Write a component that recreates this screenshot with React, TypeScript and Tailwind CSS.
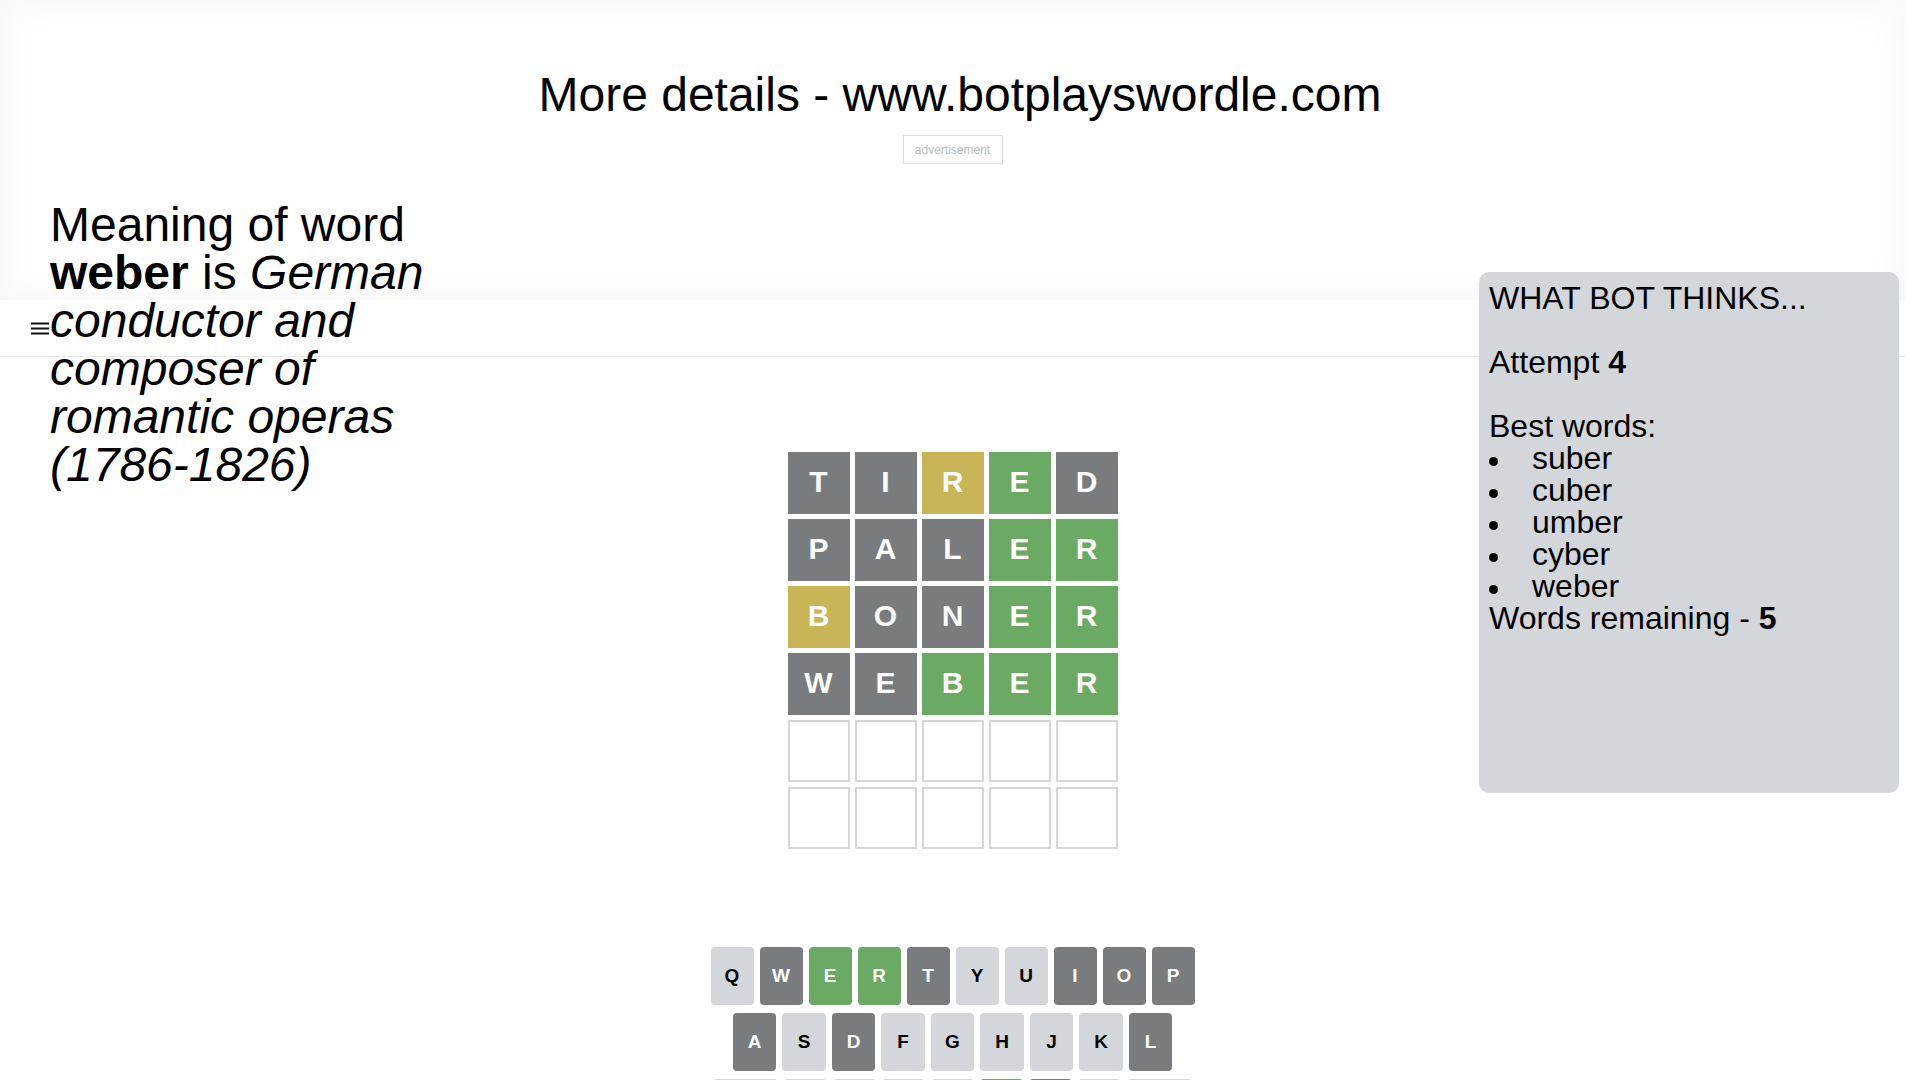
import React from "react";

type Tile = { l: string; s: "g" | "y" | "x" };

const GUESSES: Tile[][] = [
    [{ l: "T", s: "x" }, { l: "I", s: "x" }, { l: "R", s: "y" }, { l: "E", s: "g" }, { l: "D", s: "x" }],
    [{ l: "P", s: "x" }, { l: "A", s: "x" }, { l: "L", s: "x" }, { l: "E", s: "g" }, { l: "R", s: "g" }],
    [{ l: "B", s: "y" }, { l: "O", s: "x" }, { l: "N", s: "x" }, { l: "E", s: "g" }, { l: "R", s: "g" }],
    [{ l: "W", s: "x" }, { l: "E", s: "x" }, { l: "B", s: "g" }, { l: "E", s: "g" }, { l: "R", s: "g" }],
];

const tileColor = {
    g: "bg-[#6aaa64]",
    y: "bg-[#c9b458]",
    x: "bg-[#787c7e]",
};

const GRAY = new Set(["W", "T", "I", "O", "P", "A", "D", "L", "N"]);
const GREEN = new Set(["E", "R", "B"]);

function keyClass(k: string) {
    if (GREEN.has(k)) return "bg-[#6aaa64] text-white";
    if (GRAY.has(k)) return "bg-[#787c7e] text-white";
    return "bg-[#d3d6da] text-black";
}

function Key({ k, wide }: { k: string; wide?: boolean }) {
    return (
        <div className={`${wide ? "w-[43.5px]" : "w-[43px]"} h-[58px] rounded-[4px] flex items-center justify-center text-[19px] font-bold ${keyClass(k)}`}>
            {k}
        </div>
    );
}

const BEST = ["suber", "cuber", "umber", "cyber", "weber"];

export default function App() {
    const rows = [...GUESSES.map((r) => r as (Tile | null)[]), [null, null, null, null, null], [null, null, null, null, null]];

    return (
        <div className="h-[1080px] w-[1920px] overflow-auto font-['Liberation_Sans',Arial,sans-serif] text-black bg-white [&::-webkit-scrollbar]:w-[15px] [&::-webkit-scrollbar]:h-[15px] [&::-webkit-scrollbar-track]:bg-[#f1f1f1] [&::-webkit-scrollbar-thumb]:bg-[#c1c1c1] [&::-webkit-scrollbar-thumb]:border-[2px] [&::-webkit-scrollbar-thumb]:border-solid [&::-webkit-scrollbar-thumb]:border-[#f1f1f1] [&::-webkit-scrollbar-corner]:bg-[#f1f1f1]">
            <div className="relative w-[1930px]">
                <div className="w-[1905px]">
                    {/* header / ad */}
                    <div className="h-[300px] bg-white shadow-[inset_0_0_40px_rgba(0,0,0,0.045)] flex flex-col items-center pt-[67px]">
                        <h1 className="text-[48px] leading-[55px] pl-[15px]">More details - www.botplayswordle.com</h1>
                        <div className="mt-[13px] w-[100px] h-[29px] border border-[#dddddd] text-[12px] text-[#bbbbbb] flex items-center justify-center">
                            advertisement
                        </div>
                    </div>

                    {/* nav */}
                    <div className="h-[57px] border-b border-[#e6e6e6] flex items-center pl-[31px]">
                        <svg width="18" height="13" viewBox="0 0 18 13">
                            <rect x="0" y="0.5" width="18" height="2" fill="#111" />
                            <rect x="0" y="5.5" width="18" height="2" fill="#111" />
                            <rect x="0" y="10.5" width="18" height="2" fill="#111" />
                        </svg>
                    </div>

                    {/* board */}
                    <div className="pt-[95px] flex flex-col items-center">
                        <div className="grid grid-cols-5 gap-[5px] w-[330px]">
                            {rows.flat().map((t, i) =>
                                t ? (
                                    <div key={i} className={`w-[62px] h-[62px] flex items-center justify-center pb-[3px] text-white text-[30px] font-bold ${tileColor[t.s]}`}>
                                        {t.l}
                                    </div>
                                ) : (
                                    <div key={i} className="w-[62px] h-[62px] border-2 border-[#d3d6da]" />
                                )
                            )}
                        </div>

                        {/* keyboard */}
                        <div className="mt-[98px] flex flex-col items-center gap-[8px]">
                            <div className="flex gap-[6px]">
                                {"QWERTYUIOP".split("").map((k) => <Key key={k} k={k} />)}
                            </div>
                            <div className="flex gap-[6px]">
                                {"ASDFGHJKL".split("").map((k) => <Key key={k} k={k} wide />)}
                            </div>
                            <div className="flex gap-[6px]">
                                <div className="w-[65px] h-[58px] rounded-[4px] bg-[#d3d6da] flex items-center justify-center text-[12px] font-bold">ENTER</div>
                                {"ZXCVBNM".split("").map((k) => <Key key={k} k={k} />)}
                                <div className="w-[65px] h-[58px] rounded-[4px] bg-[#d3d6da] flex items-center justify-center">
                                    <svg width="24" height="24" viewBox="0 0 24 24">
                                        <path fill="#1a1a1b" d="M22 3H7c-.69 0-1.23.35-1.59.88L0 12l5.41 8.11c.36.53.9.89 1.59.89h15c1.1 0 2-.9 2-2V5c0-1.1-.9-2-2-2zm0 16H7.07L2.4 12l4.66-7H22v14zm-11.59-2L14 13.41 17.59 17 19 15.59 15.41 12 19 8.41 17.59 7 14 10.59 10.41 7 9 8.41 12.59 12 9 15.59z" />
                                    </svg>
                                </div>
                            </div>
                        </div>
                        <div className="h-[300px]" />
                    </div>
                </div>

                {/* word meaning */}
                <div className="absolute left-[50px] top-[201px] w-[420px] text-[48px] leading-[48px]">
                    Meaning of word <b>weber</b> is <i>German conductor and composer of romantic operas (1786-1826)</i>
                </div>

                {/* bot panel */}
                <div className="absolute left-[1479px] top-[272px] w-[420px] h-[521px] rounded-[10px] bg-[#d3d6da] pl-[10px] pt-[10px] text-[32px] leading-[32px]">
                    <div>WHAT BOT THINKS...</div>
                    <div className="h-[32px]" />
                    <div>
                        Attempt <b>4</b>
                    </div>
                    <div className="h-[32px]" />
                    <div>Best words:</div>
                    {BEST.map((w) => (
                        <div key={w} className="flex items-center">
                            <span className="w-[9px] h-[9px] rounded-full bg-black mt-[6px] mr-[34px]" />
                            {w}
                        </div>
                    ))}
                    <div>
                        Words remaining - <b>5</b>
                    </div>
                </div>
            </div>
        </div>
    );
}
